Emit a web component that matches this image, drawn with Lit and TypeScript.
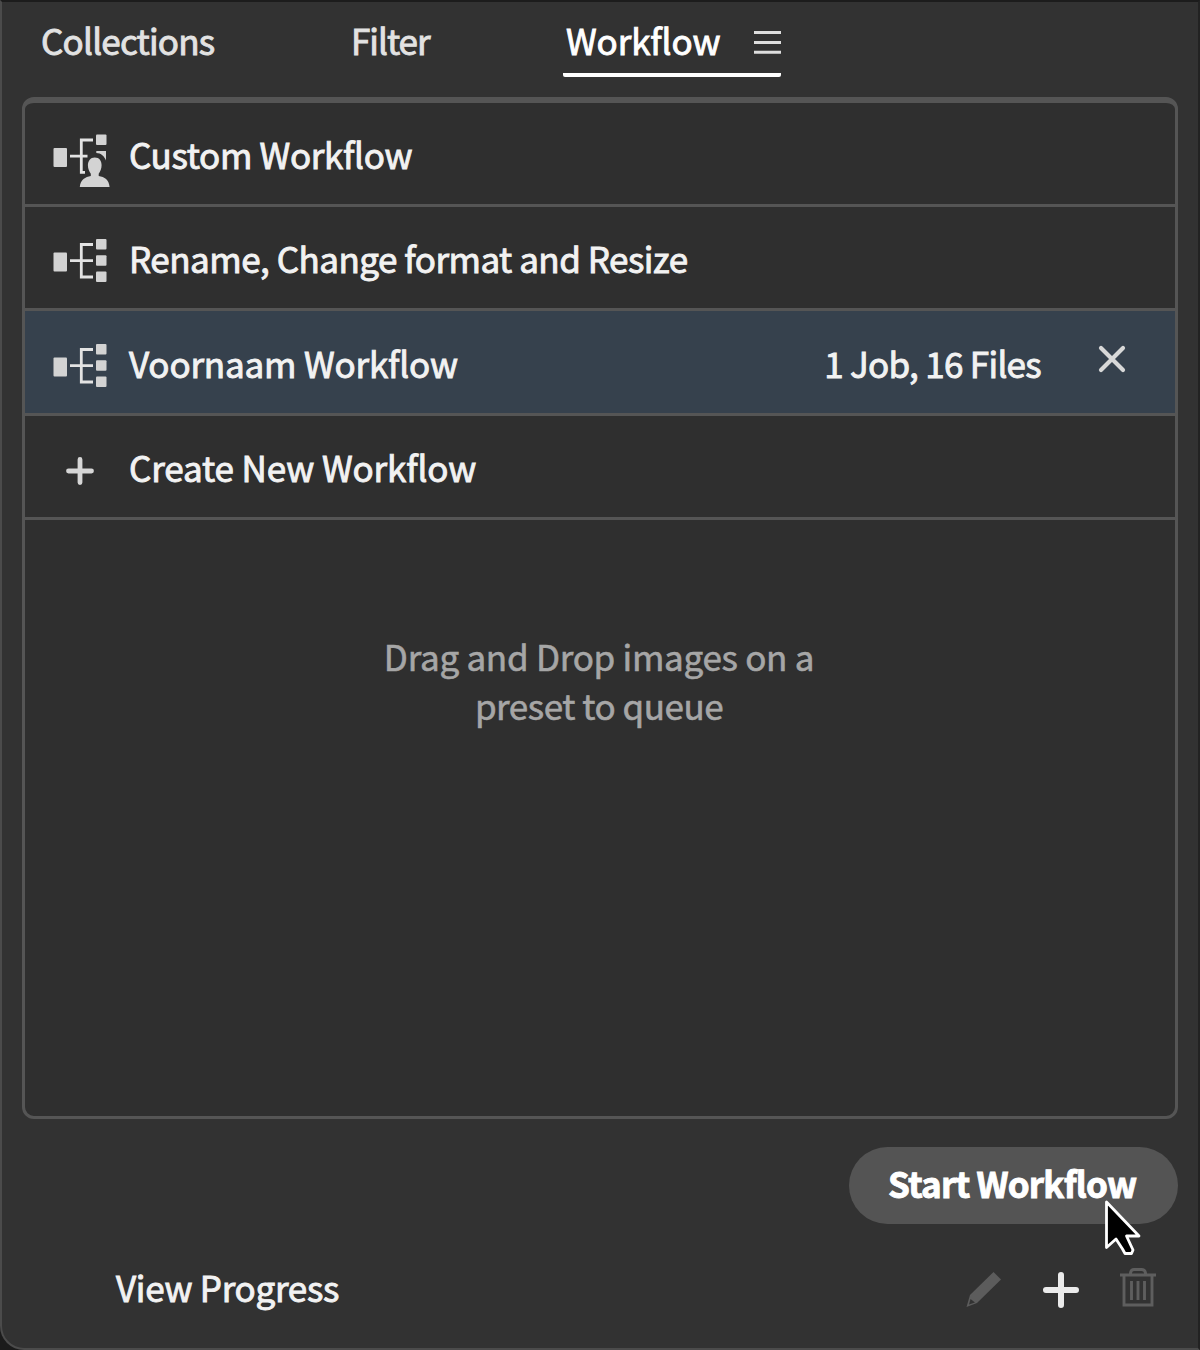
import { LitElement, html, css, nothing } from "lit";
import { customElement } from "lit/decorators.js";
import { classMap } from "lit/directives/class-map.js";

interface Preset {
  name: string;
  kind: string;
  icon: "custom" | "flow" | "plus";
  status?: string;
}

const PRESETS: Preset[] = [
  { name: "Custom Workflow", kind: "custom", icon: "custom" },
  { name: "Rename, Change format and Resize", kind: "rename", icon: "flow" },
  { name: "Voornaam Workflow", kind: "voornaam", icon: "flow", status: "1 Job, 16 Files" },
  { name: "Create New Workflow", kind: "create", icon: "plus" },
];

const flowIcon = html`<svg class="glyph" width="60" height="60" viewBox="0 0 60 60">
  <g fill="#d3d3d3">
    <rect x="3.5" y="21.5" width="13.5" height="19" rx="1" />
    <rect x="46" y="8" width="10.5" height="10.5" rx="1" />
    <rect x="46" y="24.3" width="10.5" height="10.5" rx="1" />
    <rect x="46" y="40.5" width="10.5" height="10.5" rx="1" />
  </g>
  <path d="M20 29.7H43M43 13.5H31.3V46H43" fill="none" stroke="#e3e3e3" stroke-width="2.8" />
</svg>`;

const customIcon = html`<svg class="glyph" width="60" height="60" viewBox="0 0 60 60">
  <g fill="#d3d3d3">
    <rect x="3.5" y="21" width="13.5" height="19" rx="1" />
    <rect x="46" y="7.5" width="10.5" height="10.5" rx="1" />
    <path d="M46.3 24H56V33.5C54.5 29.5 51 26 46.3 26Z" />
    <path d="M44.7 30.5C49.5 30.5 51.6 34 51.6 38.2C51.6 42 50.2 44.5 48.7 46.7V49C54.5 50 59 52.5 59.6 60H29.8C30.4 52.5 35.5 50 40.8 49V46.7C39.3 44.5 37.9 42 37.9 38.2C37.9 34 40.5 30.5 44.7 30.5Z" />
  </g>
  <path d="M20 29.2H37.5M43 13H31.3V45.3H35" fill="none" stroke="#e3e3e3" stroke-width="2.8" />
</svg>`;

const plusIcon = html`<svg class="glyph" width="60" height="60" viewBox="0 0 60 60">
  <path d="M18.5 31H41.5M30 19.5V42.5" stroke="#d6d6d6" stroke-width="4.8" stroke-linecap="round" />
</svg>`;

const ICONS = { custom: customIcon, flow: flowIcon, plus: plusIcon };

@customElement("app-root")
export class AppRoot extends LitElement {
  static styles = css`
    :host {
      display: block;
      height: 1350px;
      background: #1b1b1b;
      font-family: "Noto Sans CJK SC", "Open Sans", sans-serif;
      font-size: 35px;
      line-height: 50px;
      color: #f2f2f2;
      white-space: nowrap;
      -webkit-text-stroke: 0.9px currentColor;
    }
    * { box-sizing: border-box; }
    svg { display: block; flex: none; }
    .panel {
      display: flex;
      flex-direction: column;
      height: 1350px;
      background: #323232;
      border: 2px solid #4b4b4b;
      border-top-color: #1c1c1c;
      border-right-color: #222;
      border-bottom-left-radius: 24px;
      padding: 0 20px;
    }
    .tabs {
      display: flex;
      height: 95px;
      padding-top: 13px;
      color: #e2e2e2;
    }
    .tab { height: 62px; }
    .collections { width: 310px; padding-left: 19px; }
    .filter { width: 231px; padding-left: 19px; }
    .active {
      display: flex;
      justify-content: space-between;
      width: 218px;
      padding-left: 3px;
      color: #fff;
      border-bottom: 4px solid #fff;
      border-radius: 2px;
    }
    .menu { margin-top: 15px; }
    .list {
      flex: none;
      height: 1022px;
      border: 3px solid #555;
      border-top-width: 6px;
      border-radius: 12px;
      background: #2f2f2f;
    }
    .row {
      display: flex;
      align-items: center;
      height: 104px;
      padding: 0 49px 0 25px;
      border-bottom: 3px solid #555;
    }
    .row.tall { height: 105px; }
    .row.selected { background: #36414d; }
    .glyph { margin: 7px 19px 0 0; }
    .name { flex: 1; padding-top: 1px; }
    .status { margin-right: 57px; padding-top: 1px; }
    .close { margin-top: -7px; }
    .hint {
      padding: 111px 2px 0 0;
      text-align: center;
      line-height: 49px;
      color: #a6a6a6;
      -webkit-text-stroke-width: 0.6px;
    }
    .actions {
      display: flex;
      justify-content: flex-end;
      margin-top: 28px;
    }
    .start {
      position: relative;
      width: 329px;
      height: 77px;
      padding: 11px 0 0 39px;
      border-radius: 39px;
      background: #545454;
      color: #fff;
      font-weight: 700;
    }
    .cursor { position: absolute; left: 251px; top: 49px; }
    .footer {
      display: flex;
      align-items: center;
      height: 70px;
      margin-top: 31px;
      padding: 0 20px 0 94px;
    }
    .progress { flex: 1; margin-top: -6px; }
    .tool { margin-left: 37px; }
    .pencil { margin-left: 0; }
    .trash { margin-top: -6px; }
    .t-collections { letter-spacing: -0.78px; }
    .t-filter { letter-spacing: -1px; }
    .t-workflow { letter-spacing: -0.12px; }
    .t-custom { letter-spacing: -0.34px; }
    .t-rename { letter-spacing: -0.5px; }
    .t-voornaam { letter-spacing: -0.18px; }
    .t-status { letter-spacing: -0.7px; }
    .t-create { letter-spacing: -0.12px; }
    .t-drag { letter-spacing: -0.28px; }
    .t-preset { letter-spacing: -0.48px; }
    .t-start { letter-spacing: -0.8px; }
    .t-view { letter-spacing: -0.29px; }
  `;

  render() {
    return html`<div class="panel">
      <nav class="tabs">
        <div class="tab collections"><span class="t-collections">Collections</span></div>
        <div class="tab filter"><span class="t-filter">Filter</span></div>
        <div class="tab active">
          <span class="t-workflow">Workflow</span>
          <svg class="menu" width="27" height="26" viewBox="0 0 27 26">
            <path d="M0 2.5H27M0 12.5H27M0 22.3H27" stroke="#dedede" stroke-width="3" />
          </svg>
        </div>
      </nav>
      <section class="list">
        ${PRESETS.map(
          (p) => html`<div class=${classMap({ row: true, selected: !!p.status, tall: !!p.status })}>
            ${ICONS[p.icon]}
            <div class="name"><span class="t-${p.kind}">${p.name}</span></div>
            ${p.status
              ? html`<div class="status"><span class="t-status">${p.status}</span></div>
                  <svg class="close" width="28" height="28" viewBox="0 0 28 28">
                    <path d="M3 3L25 25M25 3L3 25" stroke="#d8d8d8" stroke-width="4.2" stroke-linecap="round" />
                  </svg>`
              : nothing}
          </div>`
        )}
        <div class="hint">
          <span class="t-drag">Drag and Drop images on a</span><br />
          <span class="t-preset">preset to queue</span>
        </div>
      </section>
      <div class="actions">
        <div class="start">
          <span class="t-start">Start Workflow</span>
          <svg class="cursor" width="46" height="66" viewBox="0 0 46 66">
            <path d="M6.5 6V51.5L16 43L22.5 53L25 57.5H31.5L33 54L26.5 40H39Z" fill="#000" stroke="#fff" stroke-width="2.8" stroke-linejoin="round" />
          </svg>
        </div>
      </div>
      <footer class="footer">
        <div class="progress"><span class="t-view">View Progress</span></div>
        <svg class="tool pencil" width="40" height="40" viewBox="0 0 40 40">
          <path d="M29.5 2L37 9.5L13 33L2.5 37L6 25Z" fill="#5c5c5c" />
          <path d="M6.500 29L11 32.500L5 34.500Z" fill="#323232" />
        </svg>
        <svg class="tool" width="40" height="40" viewBox="0 0 40 40">
          <path d="M5 20H35M20 5V35" stroke="#ebebeb" stroke-width="6" stroke-linecap="round" />
        </svg>
        <svg class="tool trash" width="40" height="40" viewBox="0 0 40 40">
          <path d="M2 8H38M6 8V38H34V8M12.5 8V6Q13 2.5 16 2.5H23.5Q27 2.5 27.5 6V8M13.5 14V33M20 14V33M26.500 14V33" fill="none" stroke="#5e5e5e" stroke-width="2.9" />
        </svg>
      </footer>
    </div>`;
  }
}
